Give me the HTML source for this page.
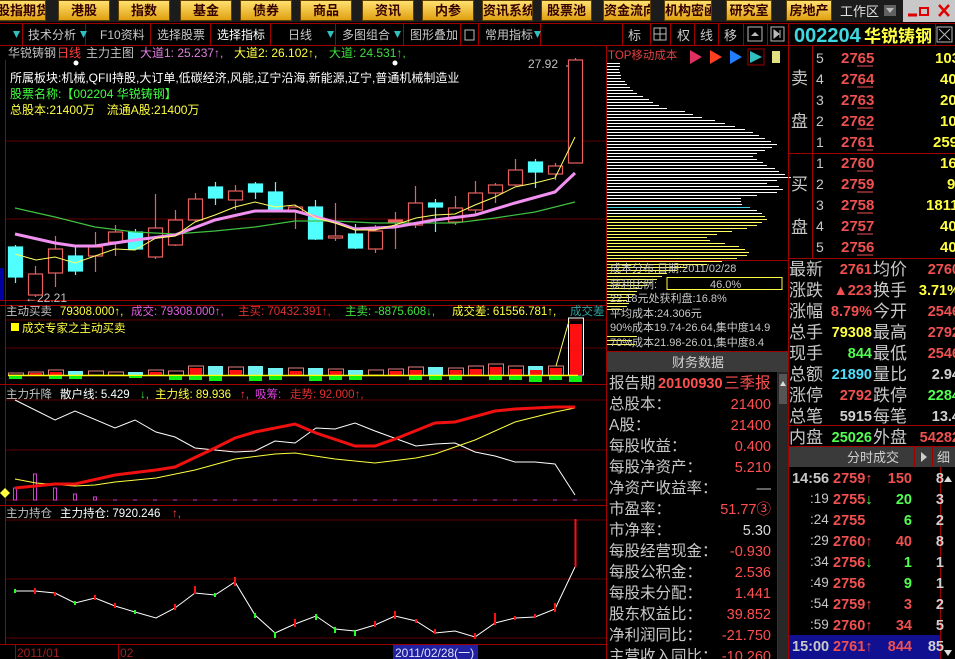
<!DOCTYPE html>
<html><head><meta charset="utf-8">
<style>
*{margin:0;padding:0;box-sizing:border-box}
body{width:955px;height:659px;background:#000;overflow:hidden;position:relative;font-family:"Liberation Sans","Noto Sans CJK SC",sans-serif}
.b{position:absolute;top:0;height:21px;background:linear-gradient(#ffe070,#e0a010);border:1px solid #604000;color:#300;font-weight:bold;font-size:13px;line-height:19px;text-align:center;white-space:nowrap;overflow:hidden;font-family:"Liberation Sans","Noto Sans CJK SC",sans-serif}
svg{position:absolute;left:0;top:0}
text{font-family:"Liberation Sans","Noto Sans CJK SC",sans-serif}
</style></head><body>
<div style="position:absolute;left:0;top:0;width:955px;height:22px;background:#1c1c1c"></div>
<div class="b" style="left:-4px;width:50px">股指期货</div>
<div class="b" style="left:58px;width:52px">港股</div>
<div class="b" style="left:118px;width:52px">指数</div>
<div class="b" style="left:180px;width:52px">基金</div>
<div class="b" style="left:240px;width:52px">债券</div>
<div class="b" style="left:300px;width:52px">商品</div>
<div class="b" style="left:362px;width:52px">资讯</div>
<div class="b" style="left:422px;width:52px">内参</div>
<div class="b" style="left:482px;width:51px">资讯系统</div>
<div class="b" style="left:541px;width:51px">股票池</div>
<div class="b" style="left:603px;width:48px">资金流向</div>
<div class="b" style="left:664px;width:48px">机构密函</div>
<div class="b" style="left:726px;width:46px">研究室</div>
<div class="b" style="left:786px;width:46px">房地产</div>
<div style="position:absolute;left:903px;top:0;width:52px;height:22px;background:#c8c8c8"></div>
<svg width="955" height="659" viewBox="0 0 955 659">
<text x="840" y="16" fill="#e0e0e0" font-size="13">工作区</text>
<rect x="884" y="5" width="12" height="11" fill="#606060"/><path d="M886 8h8l-4 5z" fill="#bbb"/>
<path d="M908 15h9" stroke="#e00000" stroke-width="3"/><rect x="920" y="8" width="8" height="7" fill="none" stroke="#e00000" stroke-width="2"/><path d="M939 5l10 11M949 5l-10 11" stroke="#e00000" stroke-width="2.5"/>
<!-- toolbar row -->
<path d="M0 23.5h955M0 45.5h955" stroke="#a00000"/>
<g stroke="#a00000"><path d="M22.5 24v21M85.5 24v21M150.5 24v21M210.5 24v21M270.5 24v21M335.5 24v21M403.5 24v21M460.5 24v21M478.5 24v21M540.5 24v21M622.5 24v21M650.5 24v21M670.5 24v21M694.5 24v21M718.5 24v21M743.5 24v21M767.5 24v21M788.5 24v21M935.5 24v21"/></g>
<g fill="#30c0c0"><path d="M13 31h7l-3.5 7z"/><path d="M80 31h7l-3.5 7z"/><path d="M327 31h7l-3.5 7z"/><path d="M394 31h7l-3.5 7z"/><path d="M534 31h7l-3.5 7z"/></g>
<g fill="#c8c8c8" font-size="12">
<text x="28" y="39">技术分析</text><text x="100" y="39">F10资料</text><text x="157" y="39">选择股票</text><text x="217" y="39" fill="#fff">选择指标</text><text x="288" y="39">日线</text><text x="342" y="39">多图组合</text><text x="410" y="39">图形叠加</text><text x="485" y="39">常用指标</text>
<text x="628" y="40" font-size="13">标</text><text x="677" y="40" font-size="13">权</text><text x="700" y="40" font-size="13">线</text><text x="724" y="40" font-size="13">移</text>
</g>
<rect x="654" y="28" width="12" height="12" fill="none" stroke="#bbb"/><path d="M660 28v12M654 34h12" stroke="#bbb"/>
<rect x="748" y="27" width="14" height="14" fill="none" stroke="#bbb"/><path d="M751 36h8l-4-4z" fill="#bbb"/>
<rect x="771" y="27" width="13" height="14" fill="none" stroke="#bbb"/><path d="M774 30l5 4-5 4z M780 30v8" fill="#bbb" stroke="#bbb"/>
<rect x="465" y="30" width="9" height="10" fill="none" stroke="#bbb"/>
<text x="794" y="42" fill="#40d8e0" font-size="20" font-weight="bold" font-family="Liberation Serif">002204</text>
<text x="864" y="42" fill="#ffff40" font-size="17" font-weight="bold">华锐铸钢</text>
<rect x="937" y="27" width="15" height="15" fill="none" stroke="#bbb"/><path d="M939 29l11 11M950 29l-11 11" stroke="#bbb"/>

<!-- left chart frame -->
<g stroke="#a00000" fill="none">
<path d="M606.5 46v613M5.5 60v584M0 300.5h606M0 305.5h606M0 384.5h606M0 505.5h606M0 644.5h606"/>
</g>
<g stroke="#600000"><path d="M6 141h600M6 219h600M6 320h600M6 348h600M6 400h600M6 450h600M6 500h600M6 520h600M6 579h600M6 638h600"/></g>
<!-- header texts -->
<g font-size="12">
<text x="8" y="57" fill="#c0c0c0">华锐铸钢</text><text x="57" y="57" fill="#ff4040">日线</text><text x="86" y="57" fill="#c0c0c0">主力主图</text>
<text x="140" y="57" fill="#e080e0">大道1: 25.237↑,</text><text x="234" y="57" fill="#ffff40">大道2: 26.102↑,</text><text x="329" y="57" fill="#40e040">大道: 24.531↑,</text>
<text x="10" y="82" fill="#fff">所属板块:机械,QFII持股,大订单,低碳经济,风能,辽宁沿海,新能源,辽宁,普通机械制造业</text>
<text x="10" y="98" fill="#40ff40">股票名称:【002204 华锐铸钢】</text>
<text x="10" y="114" fill="#ffff40">总股本:21400万　流通A股:21400万</text>
<text x="528" y="68" fill="#c0c0c0">27.92</text><text x="25" y="302" fill="#c0c0c0">←22.21</text>
</g>
<circle cx="76" cy="63" r="2.5" fill="#fff"/><circle cx="395" cy="63" r="2.5" fill="#fff"/>
<path d="M566 66h10l4-5" stroke="#c0c0c0" fill="none"/>
<!-- candles -->
<g stroke-width="1.2">
<g stroke="#50ffff" fill="#50ffff">
<path d="M15.5 245v38M75.5 247v28M135.5 229v21M215.5 182v23M255.5 182v17M275.5 182v30M315.5 200v40M355.5 224v25M435.5 199v33M535.5 159v29"/>
<rect x="8.5" y="247" width="14" height="30"/><rect x="68.5" y="256" width="14" height="15"/><rect x="128.5" y="232" width="14" height="17"/><rect x="208.5" y="187" width="14" height="11"/><rect x="248.5" y="184" width="14" height="8"/><rect x="268.5" y="192" width="14" height="18"/><rect x="308.5" y="207" width="14" height="32"/><rect x="348.5" y="234" width="14" height="14"/><rect x="428.5" y="203" width="14" height="4"/><rect x="528.5" y="162" width="14" height="10"/>
</g>
<g stroke="#e86060" fill="#000">
<path d="M35.5 266v31M55.5 236v51M95.5 232v40M115.5 225v31M155.5 194v65M175.5 210v36M195.5 193v28M235.5 185v25M295.5 205v24M335.5 203v38M375.5 225v28M395.5 212v37M415.5 186v42M455.5 196v29M475.5 181v35M495.5 183v20M515.5 159v27M555.5 163v17M575.5 58v105"/>
<rect x="28.5" y="274" width="14" height="21"/><rect x="48.5" y="249" width="14" height="24"/><rect x="88.5" y="247" width="14" height="9"/><rect x="108.5" y="232" width="14" height="10"/><rect x="148.5" y="228" width="14" height="29"/><rect x="168.5" y="220" width="14" height="25"/><rect x="188.5" y="199" width="14" height="21"/><rect x="228.5" y="191" width="14" height="9"/><rect x="288.5" y="207" width="14" height="5"/><rect x="328.5" y="236" width="14" height="2"/><rect x="368.5" y="231" width="14" height="18"/><rect x="388.5" y="220" width="14" height="2" fill="#e86060"/><rect x="408.5" y="203" width="14" height="22"/><rect x="448.5" y="208" width="14" height="14"/><rect x="468.5" y="193" width="14" height="17"/><rect x="488.5" y="185" width="14" height="8"/><rect x="508.5" y="170" width="14" height="15"/><rect x="548.5" y="166" width="14" height="8"/><rect x="568.5" y="60" width="14" height="103"/>
</g></g>
<polyline fill="none" stroke="#40c040" stroke-width="1.2" points="15,208 55,217 95,227 135,232 175,234 215,231 255,227 295,221 335,221 375,223 416,223 455,223 495,218 535,212 575,202"/>
<polyline fill="none" stroke="#f090f0" stroke-width="3" points="15,234 55,243 75,246 95,246 135,240 175,235 215,220 255,211 295,211 335,222 355,229 395,227 435,220 475,215 515,203 555,192 575,173"/>
<polyline fill="none" stroke="#ffff60" stroke-width="1" points="15,254 36,260 55,257 75,263 95,256 115,249 135,250 156,238 175,236 195,222 215,215 235,207 255,202 275,207 295,205 316,218 335,223 355,230 375,230 395,225 416,218 435,215 455,214 475,205 495,197 515,187 535,183 555,178 575,137"/>
<rect x="0" y="268" width="4" height="32" fill="#0000a0"/>
<!-- volume panel -->
<g font-size="11.5">
<text x="6" y="315" fill="#c0c0c0">主动买卖</text><text x="60" y="315" fill="#ffff40">79308.000↑,</text><text x="131" y="315" fill="#e060e0">成交: 79308.000↑,</text><text x="238" y="315" fill="#e03030">主买: 70432.391↑,</text><text x="345" y="315" fill="#40e040">主卖: -8875.608↓,</text><text x="452" y="315" fill="#ffff40">成交差: 61556.781↑,</text><text x="570" y="315" fill="#30a0a0">成交差</text>
<rect x="11" y="323" width="8" height="8" fill="#ffff00"/><text x="22" y="332" fill="#ffff40">成交专家之主动买卖</text>
</g>
<g id="vol">
<g fill="#70f0f0"><rect x="68" y="371" width="15" height="4"/><rect x="128" y="372" width="15" height="3"/><rect x="208" y="366" width="15" height="9"/><rect x="248" y="366" width="15" height="9"/><rect x="268" y="368" width="15" height="7"/><rect x="308" y="368" width="15" height="7"/><rect x="348" y="370" width="15" height="5"/><rect x="428" y="367" width="15" height="8"/><rect x="528" y="366" width="15" height="9"/></g>
<g fill="none" stroke="#e08080"><rect x="8.5" y="373" width="15" height="2"/><rect x="28.5" y="372" width="15" height="3"/><rect x="48.5" y="370" width="15" height="5"/><rect x="88.5" y="371" width="15" height="4"/><rect x="108.5" y="372" width="15" height="3"/><rect x="148.5" y="370" width="15" height="5"/><rect x="168.5" y="371" width="15" height="4"/><rect x="188.5" y="366" width="15" height="9"/><rect x="228.5" y="367" width="15" height="8"/><rect x="288.5" y="368" width="15" height="7"/><rect x="328.5" y="369" width="15" height="6"/><rect x="368.5" y="370" width="15" height="5"/><rect x="388.5" y="369" width="15" height="6"/><rect x="408.5" y="367" width="15" height="8"/><rect x="448.5" y="368" width="15" height="7"/><rect x="468.5" y="366" width="15" height="9"/><rect x="488.5" y="364" width="15" height="11"/><rect x="508.5" y="366" width="15" height="9"/><rect x="548.5" y="366" width="15" height="9"/><rect x="568.5" y="318" width="15" height="57" stroke="#fff"/></g>
<g fill="#ff1010"><rect x="30" y="373" width="12" height="2"/><rect x="50" y="372" width="12" height="3"/><rect x="150" y="372" width="12" height="3"/><rect x="190" y="368" width="12" height="7"/><rect x="230" y="370" width="12" height="5"/><rect x="290" y="371" width="12" height="4"/><rect x="330" y="371" width="12" height="4"/><rect x="390" y="371" width="12" height="4"/><rect x="410" y="370" width="12" height="5"/><rect x="450" y="370" width="12" height="5"/><rect x="470" y="369" width="12" height="6"/><rect x="490" y="367" width="12" height="8"/><rect x="510" y="369" width="12" height="6"/><rect x="530" y="370" width="12" height="5"/><rect x="550" y="368" width="12" height="7"/><rect x="570" y="324" width="12" height="51"/></g>
<path d="M8 375.5h570" stroke="#ffff00" stroke-width="1.5"/>
<g fill="#10f010"><rect x="9" y="376" width="13" height="3"/><rect x="49" y="376" width="13" height="3"/><rect x="69" y="376" width="13" height="3"/><rect x="129" y="376" width="13" height="2"/><rect x="169" y="376" width="13" height="4"/><rect x="189" y="376" width="13" height="4"/><rect x="209" y="376" width="13" height="5"/><rect x="249" y="376" width="13" height="5"/><rect x="269" y="376" width="13" height="4"/><rect x="309" y="376" width="13" height="5"/><rect x="329" y="376" width="13" height="4"/><rect x="349" y="376" width="13" height="4"/><rect x="409" y="376" width="13" height="4"/><rect x="429" y="376" width="13" height="4"/><rect x="449" y="376" width="13" height="4"/><rect x="489" y="376" width="13" height="4"/><rect x="509" y="376" width="13" height="4"/><rect x="529" y="376" width="13" height="6"/><rect x="549" y="376" width="13" height="4"/><rect x="569" y="376" width="13" height="6"/></g>
<path d="M556 366l13-45" stroke="#ffff60"/>
</g>
<!-- 主力升降 -->
<g font-size="11.5"><text x="6" y="398" fill="#c0c0c0">主力升降</text><text x="60" y="398" fill="#fff">散户线: 5.429</text><text x="140" y="398" fill="#40e040">↓,</text><text x="155" y="398" fill="#ffff40">主力线: 89.936</text><text x="240" y="398" fill="#ff4040">↑,</text><text x="255" y="398" fill="#e040e0">吸筹:</text><text x="290" y="398" fill="#e03030">走势: 92.000↑,</text></g>
<g fill="none" stroke="#d040d0"><rect x="13.5" y="488" width="3" height="12"/><rect x="33.5" y="474" width="3" height="26"/><rect x="53.5" y="488" width="3" height="12"/><rect x="73.5" y="494" width="3" height="6"/><rect x="93.5" y="497" width="3" height="3"/></g>
<path d="M113 500H580" stroke="#a040c0" stroke-dasharray="4 16"/>
<polyline fill="none" stroke="#fff" points="15,400 55,420 75,411 115,428 135,420 156,432 175,437 195,448 235,452 255,451 275,441 295,443 316,428 335,429 355,423 375,431 416,446 435,444 455,443 475,452 495,456 515,462 535,462 555,464 575,495"/>
<polyline fill="none" stroke="#ffff40" points="15,479 36,483 75,486 95,485 115,482 156,478 195,470 235,459 275,454 295,453 335,459 375,463 416,458 435,454 475,440 515,422 555,412 575,408"/>
<polyline fill="none" stroke="#f01010" stroke-width="3" points="15,488 55,484 75,484 115,475 156,470 175,467 215,448 235,438 255,432 295,424 316,433 355,446 375,446 395,439 435,423 455,422 495,411 515,409 555,407 575,407"/>
<path d="M0 493l5-5 5 5-5 5z" fill="#ffff40"/>
<!-- 主力持仓 -->
<g font-size="11.5"><text x="6" y="517" fill="#c0c0c0">主力持仓</text><text x="60" y="517" fill="#fff">主力持仓: 7920.246</text><text x="172" y="517" fill="#ff4040">↑,</text></g>
<polyline fill="none" stroke="#fff" points="15,591 35,591 55,593 75,603 95,598 115,606 135,612 156,618 175,608 195,593 215,595 235,582 255,615 275,633 295,624 316,616 335,629 355,631 375,625 395,616 416,621 435,633 455,631 475,637 495,623 515,618 535,617 555,609 575,567"/>
<path d="M575.5 519v48" stroke="#ff1010" stroke-width="2"/>
<g stroke="#ff1010" stroke-width="2"><path d="M35 588v6M55 592v4M95 595v5M115 603v5M175 604v6M195 586v8M235 577v9M295 619v8M375 621v6M395 611v8M416 619v4M435 629v5M475 633v6M495 613v12M515 616v4M535 614v4M555 603v9"/></g>
<g stroke="#20ff20" stroke-width="2"><path d="M15 589v4M75 601v4M135 610v4M215 593v4M255 613v5M275 632v6M316 614v6M335 627v6M355 630v6"/></g>
<!-- date axis -->
<path d="M15.5 645v14M118.5 645v14" stroke="#a00000"/>
<text x="17" y="657" fill="#a02020" font-size="12">2011/01</text><text x="120" y="657" fill="#a02020" font-size="12">02</text>
<rect x="393" y="645" width="85" height="14" fill="#2020a0"/><text x="395" y="657" fill="#e0e0ff" font-size="12">2011/02/28(一)</text>

<!-- chip panel -->
<text x="608" y="59" fill="#e04040" font-size="11.5">TOP移动成本</text>
<path d="M690 50l12 7-12 7z" fill="#e03060"/><path d="M710 50l12 7-12 7z" fill="#ff4020"/><path d="M730 50l12 7-12 7z" fill="#2080ff"/><rect x="748" y="49" width="16" height="16" fill="none" stroke="#a00000"/><path d="M750 51l12 6-12 6z" fill="#30c0c0"/><rect x="772" y="51" width="8" height="12" fill="#e0e080"/>
<path stroke="#fff" d="M607 63.5h13M607 66.5h13M607 69.5h12M607 72.5h13M607 75.5h14M607 78.5h14M607 81.5h18M607 84.5h20M607 87.5h23M607 90.5h26M607 93.5h30M607 96.5h36M607 99.5h42M607 102.5h46M607 105.5h52M607 108.5h60M607 111.5h78M607 114.5h86M607 117.5h95M607 120.5h108M607 123.5h118M607 126.5h128M607 129.5h138M607 132.5h146M607 135.5h152M607 138.5h158M607 141.5h164M607 144.5h170M607 147.5h165M607 150.5h158M607 153.5h150M607 156.5h146M607 159.5h150M607 162.5h156M607 165.5h160M607 168.5h168M607 171.5h172M607 174.5h178M607 177.5h184M607 180.5h170M607 183.5h160M607 186.5h172M607 189.5h176M607 192.5h170M607 195.5h150M607 198.5h134M607 201.5h134M607 204.5h135M607 210.5h150M607 213.5h155"/>
<path stroke="#40d0e0" d="M607 207.5h143"/>
<path stroke="#ffff60" d="M607 216.5h158M607 219.5h160M607 222.5h155M607 225.5h150M607 228.5h140M607 231.5h125M607 234.5h110M607 237.5h100M607 240.5h103M607 243.5h118M607 246.5h132M607 249.5h138M607 252.5h142M607 255.5h140M607 258.5h130M607 261.5h115M607 264.5h100M607 267.5h80M607 270.5h70M607 273.5h60M607 276.5h55M607 279.5h50M607 282.5h45M607 285.5h40M607 288.5h35M607 291.5h30M607 294.5h28M607 297.5h25M607 300.5h20M607 303.5h22M607 306.5h20M607 309.5h15M607 336.5h30M607 340.5h25M607 344.5h28"/>
<path d="M606 260.5h182" stroke="#a00000"/>
<rect x="667" y="277.5" width="115" height="12" fill="#000" stroke="#ffff40"/>
<g font-size="11" fill="#c8c8c8">
<text x="610" y="272">成本分布,日期:2011/02/28</text>
<text x="610" y="288">获利比例:</text><text x="710" y="288">46.0%</text>
<text x="610" y="302">22.18元处获利盘:16.8%</text>
<text x="610" y="317">平均成本:24.306元</text>
<text x="610" y="331">90%成本19.74-26.64,集中度14.9</text>
<text x="610" y="346">70%成本21.98-26.01,集中度8.4</text>
</g>
<!-- finance -->
<rect x="607" y="352" width="181" height="20" fill="#3a3a3a"/>
<path d="M606 351.5h182" stroke="#a00000"/>
<text x="672" y="367" fill="#d0d0d0" font-size="13">财务数据</text>
<rect x="778" y="372" width="10" height="287" fill="#282828"/><rect x="779" y="374" width="8" height="30" fill="#555"/><path d="M780 386h6l-3-5z" fill="#ddd"/>
<path d="M777.5 372v287" stroke="#a00000"/>
<g font-size="15.5" fill="#c8c8c8">
<text x="609" y="388">报告期</text><text x="658" y="388" fill="#ff5050" font-weight="bold" font-size="14.5">20100930</text><text x="724" y="388" fill="#ff5050">三季报</text>
<text x="609" y="409">总股本：</text><text x="609" y="430">A股：</text><text x="609" y="451">每股收益：</text><text x="609" y="472">每股净资产：</text><text x="609" y="493">净资产收益率：</text><text x="609" y="514">市盈率：</text><text x="609" y="535">市净率：</text><text x="609" y="556">每股经营现金：</text><text x="609" y="577">每股公积金：</text><text x="609" y="598">每股未分配：</text><text x="609" y="619">股东权益比：</text><text x="609" y="640">净利润同比：</text><text x="609" y="661">主营收入同比：</text>
</g>
<g font-size="14.5" fill="#ff5050" text-anchor="end">
<text x="771" y="409">21400</text><text x="771" y="430">21400</text><text x="771" y="451">0.400</text><text x="771" y="472">5.210</text><text x="771" y="493" fill="#c8c8c8">—</text><text x="771" y="514">51.77③</text><text x="771" y="535" fill="#d8d8d8">5.30</text><text x="771" y="556">-0.930</text><text x="771" y="577">2.536</text><text x="771" y="598">1.441</text><text x="771" y="619">39.852</text><text x="771" y="640">-21.750</text><text x="771" y="661">-10.260</text>
</g>

<!-- right panel -->
<g stroke="#a00000"><path d="M788.5 46v613M788 153.5h167M788 258.5h167M788 425.5h167M788 446.5h167M812.5 46v212M940.5 467v192"/></g>
<g font-size="17" fill="#c8c8c8"><text x="791" y="84">卖</text><text x="791" y="127">盘</text><text x="791" y="190">买</text><text x="791" y="233">盘</text></g>
<g font-size="14" fill="#c8c8c8"><text x="816" y="63">5</text><text x="816" y="84">4</text><text x="816" y="105">3</text><text x="816" y="126">2</text><text x="816" y="147">1</text><text x="816" y="168">1</text><text x="816" y="189">2</text><text x="816" y="210">3</text><text x="816" y="231">4</text><text x="816" y="252">5</text></g>
<g font-size="15" fill="#f05050" font-weight="bold"><text x="841" y="63">2765</text><text x="841" y="84">2764</text><text x="841" y="105">2763</text><text x="841" y="126">2762</text><text x="841" y="147">2761</text><text x="841" y="168">2760</text><text x="841" y="189">2759</text><text x="841" y="210">2758</text><text x="841" y="231">2757</text><text x="841" y="252">2756</text></g>
<g stroke="#f05050"><path d="M857 66h16M857 87h16M857 108h16M857 129h16M857 150h16M857 171h16M857 192h16M857 213h16M857 234h16M857 255h16"/></g>
<g font-size="15" fill="#ffff40" font-weight="bold"><text x="935" y="63">103</text><text x="940" y="84">40</text><text x="940" y="105">20</text><text x="940" y="126">10</text><text x="933" y="147">259</text><text x="940" y="168">16</text><text x="947" y="189">9</text><text x="926" y="210">1811</text><text x="940" y="231">40</text><text x="940" y="252">40</text></g>
<g font-size="17" fill="#c8c8c8"><text x="789" y="275">最新</text><text x="789" y="296">涨跌</text><text x="789" y="317">涨幅</text><text x="789" y="338">总手</text><text x="789" y="359">现手</text><text x="789" y="380">总额</text><text x="789" y="401">涨停</text><text x="789" y="422">总笔</text><text x="789" y="443">内盘</text>
<text x="873" y="275">均价</text><text x="873" y="296">换手</text><text x="873" y="317">今开</text><text x="873" y="338">最高</text><text x="873" y="359">最低</text><text x="873" y="380">量比</text><text x="873" y="401">跌停</text><text x="873" y="422">每笔</text><text x="873" y="443">外盘</text></g>
<g font-size="14.5" font-weight="bold" text-anchor="end">
<text x="872" y="274" fill="#f05050">2761</text><text x="872" y="295" fill="#f05050">▲223</text><text x="872" y="316" fill="#f05050">8.79%</text><text x="872" y="337" fill="#ffff40">79308</text><text x="872" y="358" fill="#50ff50">844</text><text x="872" y="379" fill="#50e0ff">21890</text><text x="872" y="400" fill="#f05050">2792</text><text x="872" y="421" fill="#d0d0d0">5915</text><text x="872" y="442" fill="#50ff50">25026</text>
<text x="960" y="274" fill="#f05050">2760</text><text x="960" y="295" fill="#ffff40">3.71%</text><text x="960" y="316" fill="#f05050">2546</text><text x="960" y="337" fill="#f05050">2792</text><text x="960" y="358" fill="#f05050">2546</text><text x="960" y="379" fill="#d0d0d0">2.94</text><text x="960" y="400" fill="#50ff50">2284</text><text x="960" y="421" fill="#d0d0d0">13.4</text><text x="960" y="442" fill="#f05050">54282</text>
</g>
<rect x="789" y="447" width="166" height="20" fill="#3a3a3a"/><path d="M914.5 447v20M932.5 447v20" stroke="#a00000"/>
<text x="847" y="462" fill="#d0d0d0" font-size="13">分时成交</text><path d="M921 452l6 5-6 5z" fill="#ccc"/><text x="937" y="462" fill="#d0d0d0" font-size="13">细</text>
<rect x="789" y="635" width="151" height="24" fill="#101090"/>
<rect x="941" y="467" width="14" height="192" fill="#000"/><path d="M944 482h8l-4-6zM944 650h8l-4 6z" fill="#ddd"/>
<g font-size="13.5" fill="#c8c8c8"><text x="792" y="483" font-size="14.5" font-weight="bold">14:56</text><text x="810" y="503">:19</text><text x="810" y="524">:24</text><text x="810" y="545">:29</text><text x="810" y="566">:34</text><text x="810" y="587">:49</text><text x="810" y="608">:54</text><text x="810" y="629">:59</text><text x="792" y="651" font-size="14.5" font-weight="bold">15:00</text></g>
<g font-size="14.5" font-weight="bold" fill="#f05050"><text x="833" y="483">2759↑</text><text x="833" y="504">2755<tspan fill="#50ff50">↓</tspan></text><text x="833" y="525">2755</text><text x="833" y="546">2760↑</text><text x="833" y="567">2756<tspan fill="#50ff50">↓</tspan></text><text x="833" y="588">2756</text><text x="833" y="609">2759↑</text><text x="833" y="630">2760↑</text><text x="833" y="651">2761↑</text></g>
<g font-size="14.5" font-weight="bold" text-anchor="end"><text x="912" y="483" fill="#f05050">150</text><text x="912" y="504" fill="#50ff50">20</text><text x="912" y="525" fill="#50ff50">6</text><text x="912" y="546" fill="#f05050">40</text><text x="912" y="567" fill="#50ff50">1</text><text x="912" y="588" fill="#50ff50">9</text><text x="912" y="609" fill="#f05050">3</text><text x="912" y="630" fill="#f05050">34</text><text x="912" y="651" fill="#f05050">844</text>
<text x="944" y="483" fill="#d0d0d0">8</text><text x="944" y="504" fill="#d0d0d0">3</text><text x="944" y="525" fill="#d0d0d0">2</text><text x="944" y="546" fill="#d0d0d0">8</text><text x="944" y="567" fill="#d0d0d0">1</text><text x="944" y="588" fill="#d0d0d0">1</text><text x="944" y="609" fill="#d0d0d0">2</text><text x="944" y="630" fill="#d0d0d0">5</text><text x="944" y="651" fill="#d0d0d0">85</text></g>
</svg>
</body></html>
